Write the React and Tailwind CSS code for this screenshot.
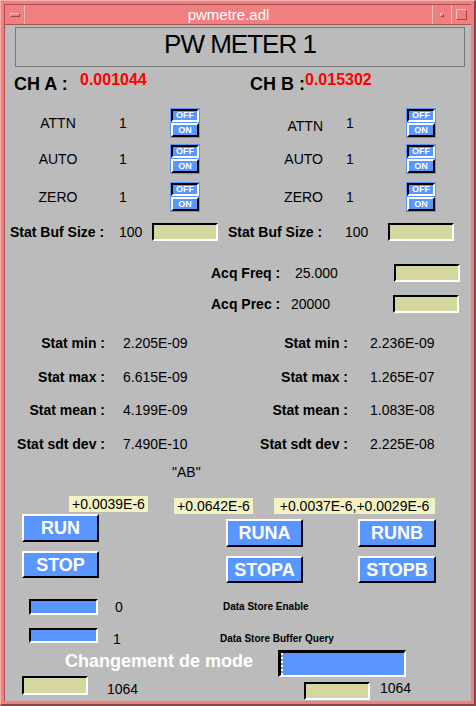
const frameFont = "font-['Liberation_Sans',Arial,sans-serif]";

function Field({ className }) {
  return (
    <div
      className={`shrink-0 bg-[#d4d89e] border-2 border-t-black border-l-black border-b-white border-r-white ${className}`}
    />
  );
}

function BlueBar({ className }) {
  return (
    <div
      className={`shrink-0 bg-[#5a96ff] border-2 border-t-black border-l-black border-b-white border-r-white ${className}`}
    />
  );
}

function Btn({ label, className }) {
  return (
    <div
      className={`shrink-0 flex items-center justify-center bg-[#5a96ff] border-2 border-t-white border-l-white border-b-black border-r-black text-white font-bold text-[18px] leading-none ${className}`}
    >
      {label}
    </div>
  );
}

function Toggle() {
  return (
    <div className="shrink-0 w-[30px] h-[30px] bg-[#5a96ff] p-px flex flex-col gap-px">
      <div className="h-[13px] border-2 border-t-black border-l-black border-r-white border-b-white flex items-center justify-center text-white font-bold text-[9px] leading-none">
        OFF
      </div>
      <div className="flex-1 border-2 border-t-white border-l-white border-r-black border-b-black flex items-center justify-center text-white font-bold text-[9px] leading-none">
        ON
      </div>
    </div>
  );
}

function ToggleRow({ label, className, rightLabelClass = "" }) {
  return (
    <div className={`flex items-center h-[30px] ${className}`}>
      <div className="shrink-0 ml-[23px] w-[60px] text-center">{label}</div>
      <div className="shrink-0 ml-[31px] w-[20px]">1</div>
      <div className="ml-[31px]">
        <Toggle />
      </div>
      <div className={`shrink-0 ml-[43px] w-[80px] text-right ${rightLabelClass}`}>{label}</div>
      <div className="shrink-0 ml-[23px] w-[20px]">1</div>
      <div className="ml-[40px]">
        <Toggle />
      </div>
    </div>
  );
}

function StatRow({ l, v1, v2, className }) {
  return (
    <div className={`flex items-center h-[19px] ${className}`}>
      <div className="shrink-0 w-[100px] text-right font-bold">{l}</div>
      <div className="shrink-0 ml-[18px] w-[90px]">{v1}</div>
      <div className="shrink-0 ml-[35px] w-[100px] text-right font-bold">{l}</div>
      <div className="shrink-0 ml-[22px]">{v2}</div>
    </div>
  );
}

export default function App() {
  return (
    <div
      className={`w-[476px] h-[706px] bg-[#f08080] border-t border-l border-t-[#f8b0b0] border-l-[#f8b0b0] border-r-2 border-b-2 border-r-[#8a4545] border-b-[#8a4545] pt-[3px] pl-[3px] pr-[3px] pb-[3px] flex flex-col text-[14px] leading-none text-black ${frameFont}`}
    >
      {/* title bar */}
      <div className="h-[21px] shrink-0 flex border-t border-l border-b border-[#a85050]">
        <div className="w-[20px] border-r border-r-[#f8b8b8] flex items-center justify-center">
          <div className="w-[10px] h-[4px] border-t border-l border-t-[#f8c0c0] border-l-[#f8c0c0] border-b border-r border-b-[#a04848] border-r-[#a04848]" />
        </div>
        <div className="flex-1 border-r border-r-[#f8b8b8] flex items-center justify-center text-white text-[15px]">
          pwmetre.adl
        </div>
        <div className="w-[19px] border-r border-r-[#f8b8b8] flex items-center justify-center">
          <div className="w-[4px] h-[4px] border-t border-l border-t-[#f8c0c0] border-l-[#f8c0c0] border-b border-r border-b-[#a04848] border-r-[#a04848]" />
        </div>
        <div className="w-[19px] flex items-center justify-center">
          <div className="w-[11px] h-[11px] border-t border-l border-t-[#f8c0c0] border-l-[#f8c0c0] border-b border-r border-b-[#a04848] border-r-[#a04848]" />
        </div>
      </div>

      {/* display */}
      <div className="flex-1 bg-[#bbbbbb] border-l border-l-[#a85050] flex flex-col">
        <div className="mt-[2px] ml-[10px] w-[450px] h-[40px] shrink-0 border border-[#7a7a7a] flex items-center justify-center pb-[6px] text-[26px] tracking-[-1px]">
          PW METER 1
        </div>

        <div className="flex items-start h-[24px] mt-[3px]">
          <div className="shrink-0 ml-[9px] w-[66px] mt-[5px] font-bold text-[18px]">CH A :</div>
          <div className="shrink-0 w-[170px] mt-[2px] font-bold text-[16px] text-[#ff0000]">0.001044</div>
          <div className="shrink-0 w-[55px] mt-[5px] font-bold text-[18px]">CH B :</div>
          <div className="shrink-0 mt-[2px] font-bold text-[16px] text-[#ff0000]">0.015302</div>
        </div>

        <ToggleRow label="ATTN" className="mt-[14px]" rightLabelClass="mt-[6px]" />
        <ToggleRow label="AUTO" className="mt-[6px]" />
        <ToggleRow label="ZERO" className="mt-[8px]" />

        <div className="flex items-center h-[18px] mt-[11px]">
          <div className="shrink-0 ml-[5px] w-[100px] font-bold">Stat Buf Size :</div>
          <div className="shrink-0 ml-[9px] w-[30px]">100</div>
          <Field className="ml-[3px] w-[66px] h-[18px]" />
          <div className="shrink-0 ml-[10px] w-[100px] font-bold">Stat Buf Size :</div>
          <div className="shrink-0 ml-[17px] w-[30px]">100</div>
          <Field className="ml-[13px] w-[66px] h-[18px]" />
        </div>

        <div className="flex items-center h-[18px] mt-[23px]">
          <div className="shrink-0 ml-[206px] w-[80px] font-bold">Acq Freq :</div>
          <div className="shrink-0 ml-[4px] w-[60px]">25.000</div>
          <Field className="ml-[39px] w-[66px] h-[18px]" />
        </div>
        <div className="flex items-center h-[18px] mt-[13px]">
          <div className="shrink-0 ml-[206px] w-[80px] font-bold">Acq Prec :</div>
          <div className="shrink-0 ml-[0px] w-[60px]">20000</div>
          <Field className="ml-[42px] w-[66px] h-[18px]" />
        </div>

        <StatRow l="Stat min :" v1="2.205E-09" v2="2.236E-09" className="mt-[20px]" />
        <StatRow l="Stat max :" v1="6.615E-09" v2="1.265E-07" className="mt-[15px]" />
        <StatRow l="Stat mean :" v1="4.199E-09" v2="1.083E-08" className="mt-[14px]" />
        <StatRow l="Stat sdt dev :" v1="7.490E-10" v2="2.225E-08" className="mt-[15px]" />

        <div className="flex items-center h-[18px] mt-[10px]">
          <div className="ml-[167px]">"AB"</div>
        </div>

        <div className="flex items-start h-[18px] mt-[15px]">
          <div className="shrink-0 ml-[64px] w-[79px] h-[16px] bg-[#f2f2c4] flex items-center justify-center">+0.0039E-6</div>
          <div className="shrink-0 ml-[26px] mt-[2px] w-[79px] h-[16px] bg-[#f2f2c4] flex items-center justify-center">+0.0642E-6</div>
          <div className="shrink-0 ml-[21px] mt-[2px] w-[161px] h-[16px] bg-[#f2f2c4] flex items-center justify-center">+0.0037E-6,+0.0029E-6</div>
        </div>

        <div className="flex items-start h-[69px]">
          <div className="shrink-0 ml-[17px] flex flex-col gap-[9px]">
            <Btn label="RUN" className="w-[77px] h-[28px]" />
            <Btn label="STOP" className="w-[77px] h-[27px]" />
          </div>
          <div className="shrink-0 ml-[127px] mt-[5px] flex flex-col gap-[9px]">
            <Btn label="RUNA" className="w-[77px] h-[28px]" />
            <Btn label="STOPA" className="w-[77px] h-[27px]" />
          </div>
          <div className="shrink-0 ml-[55px] mt-[5px] flex flex-col gap-[9px]">
            <Btn label="RUNB" className="w-[78px] h-[28px]" />
            <Btn label="STOPB" className="w-[78px] h-[27px]" />
          </div>
        </div>

        <div className="flex items-center h-[16px] mt-[16px]">
          <BlueBar className="ml-[24px] w-[69px] h-[16px]" />
          <div className="shrink-0 ml-[17px] w-[20px]">0</div>
          <div className="shrink-0 ml-[88px] font-bold text-[10px]">Data Store Enable</div>
        </div>
        <div className="flex items-start h-[16px] mt-[13px]">
          <BlueBar className="ml-[24px] w-[69px] h-[15px]" />
          <div className="shrink-0 ml-[15px] mt-[4px] w-[20px]">1</div>
          <div className="shrink-0 ml-[87px] mt-[6px] font-bold text-[10px]">Data Store Buffer Query</div>
        </div>

        <div className="flex items-start h-[26px] mt-[6px]">
          <div className="shrink-0 ml-[60px] w-[213px] mt-[2px] font-bold text-[18px] text-white">Changement de mode</div>
          <div className="shrink-0 w-[128px] h-[27px] bg-[#5a96ff] border-t-[3px] border-l-[3px] border-t-black border-l-black border-b-2 border-r-2 border-b-white border-r-white flex">
            <div className="w-[2px] h-full border-l-2 border-dotted border-l-white" />
          </div>
        </div>

        <div className="flex items-start h-[25px]">
          <Field className="ml-[17px] w-[66px] h-[19px]" />
          <div className="shrink-0 ml-[19px] mt-[6px] w-[40px]">1064</div>
          <Field className="ml-[157px] mt-[6px] w-[66px] h-[18px]" />
          <div className="shrink-0 ml-[10px] mt-[5px]">1064</div>
        </div>
      </div>
    </div>
  );
}
